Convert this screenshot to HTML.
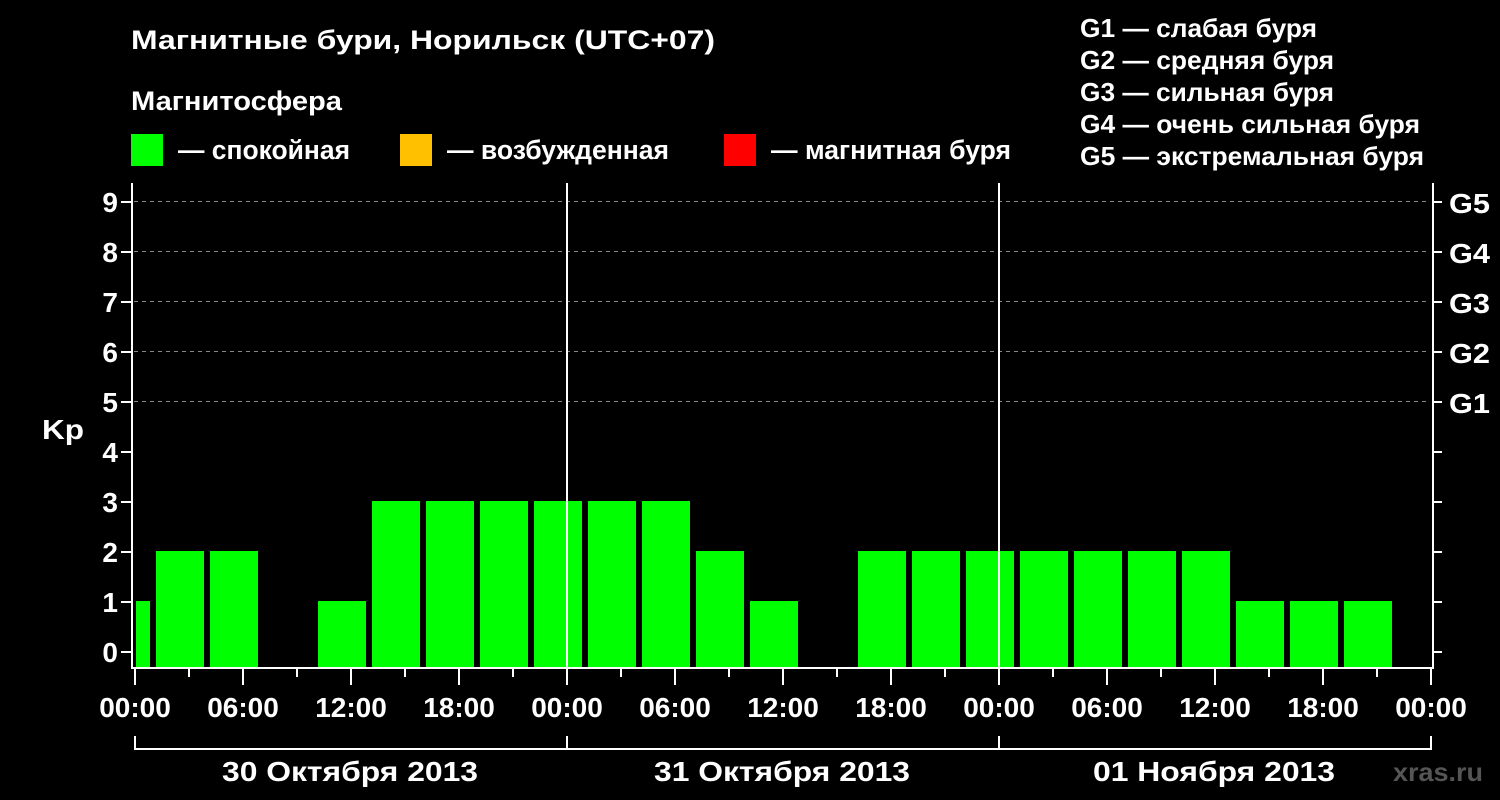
<!DOCTYPE html><html><head><style>body{margin:0;background:#000}svg{display:block}text{font-family:"Liberation Sans","DejaVu Sans",sans-serif;font-weight:bold;fill:#fff}</style></head><body>
<svg width="1500" height="800" viewBox="0 0 1500 800" xmlns="http://www.w3.org/2000/svg">
<rect width="1500" height="800" fill="#000"/>
<text x="131" y="49" font-size="27" textLength="584" lengthAdjust="spacingAndGlyphs">Магнитные бури, Норильск (UTC+07)</text>
<text x="131" y="110" font-size="27" textLength="211" lengthAdjust="spacingAndGlyphs">Магнитосфера</text>
<rect x="131" y="134" width="32" height="32" fill="#0f0"/><text x="178" y="159" font-size="27" textLength="172" lengthAdjust="spacingAndGlyphs">— спокойная</text>
<rect x="400" y="134" width="32" height="32" fill="#ffc000"/><text x="447" y="159" font-size="27" textLength="222" lengthAdjust="spacingAndGlyphs">— возбужденная</text>
<rect x="724" y="134" width="32" height="32" fill="#f00"/><text x="771" y="159" font-size="27" textLength="240" lengthAdjust="spacingAndGlyphs">— магнитная буря</text>
<g font-size="26"><text x="1080" y="37" textLength="237" lengthAdjust="spacingAndGlyphs">G1 — слабая буря</text><text x="1080" y="69" textLength="254" lengthAdjust="spacingAndGlyphs">G2 — средняя буря</text><text x="1080" y="101" textLength="254" lengthAdjust="spacingAndGlyphs">G3 — сильная буря</text><text x="1080" y="133" textLength="340" lengthAdjust="spacingAndGlyphs">G4 — очень сильная буря</text><text x="1080" y="165" textLength="344" lengthAdjust="spacingAndGlyphs">G5 — экстремальная буря</text></g>
<g stroke="#888" stroke-dasharray="4,4" stroke-width="1"><line x1="134" x2="1430" y1="201.5" y2="201.5"/><line x1="134" x2="1430" y1="251.5" y2="251.5"/><line x1="134" x2="1430" y1="301.5" y2="301.5"/><line x1="134" x2="1430" y1="351.5" y2="351.5"/><line x1="134" x2="1430" y1="401.5" y2="401.5"/></g>
<g fill="#0f0">
<rect x="136" y="601" width="14" height="66"/>
<rect x="156" y="551" width="48" height="116"/><rect x="210" y="551" width="48" height="116"/>
<rect x="318" y="601" width="48" height="66"/>
<rect x="372" y="501" width="48" height="166"/><rect x="426" y="501" width="48" height="166"/><rect x="480" y="501" width="48" height="166"/><rect x="534" y="501" width="48" height="166"/><rect x="588" y="501" width="48" height="166"/><rect x="642" y="501" width="48" height="166"/>
<rect x="696" y="551" width="48" height="116"/><rect x="750" y="601" width="48" height="66"/>
<rect x="858" y="551" width="48" height="116"/><rect x="912" y="551" width="48" height="116"/><rect x="966" y="551" width="48" height="116"/><rect x="1020" y="551" width="48" height="116"/><rect x="1074" y="551" width="48" height="116"/><rect x="1128" y="551" width="48" height="116"/><rect x="1182" y="551" width="48" height="116"/>
<rect x="1236" y="601" width="48" height="66"/><rect x="1290" y="601" width="48" height="66"/><rect x="1344" y="601" width="48" height="66"/>
</g>
<g stroke="#fff" stroke-width="2" fill="none">
<path d="M132 183V668H1433V183"/>
<line x1="567" y1="183" x2="567" y2="668"/><line x1="999" y1="183" x2="999" y2="668"/>
<path d="M121 652h11M121 602h11M121 552h11M121 502h11M121 452h11M121 402h11M121 352h11M121 302h11M121 252h11M121 202h11"/>
<path d="M1433 652h9M1433 602h9M1433 552h9M1433 502h9M1433 452h9M1433 402h9M1433 352h9M1433 302h9M1433 252h9M1433 202h9"/>
<path d="M135 669v16M243 669v16M351 669v16M459 669v16M567 669v16M675 669v16M783 669v16M891 669v16M999 669v16M1107 669v16M1215 669v16M1323 669v16M1431 669v16"/>
<path d="M189 669v8M297 669v8M405 669v8M513 669v8M621 669v8M729 669v8M837 669v8M945 669v8M1053 669v8M1161 669v8M1269 669v8M1377 669v8"/>
<path d="M135 736V749H1431V736M567 736v13M999 736v13"/>
</g>
<g font-size="28" text-anchor="end"><text x="118" y="662">0</text><text x="118" y="612">1</text><text x="118" y="562">2</text><text x="118" y="512">3</text><text x="118" y="462">4</text><text x="118" y="412">5</text><text x="118" y="362">6</text><text x="118" y="312">7</text><text x="118" y="262">8</text><text x="118" y="212">9</text></g>
<text x="42" y="439" font-size="28" textLength="42" lengthAdjust="spacingAndGlyphs">Kp</text>
<g font-size="28"><text x="1449" y="213" textLength="41" lengthAdjust="spacingAndGlyphs">G5</text><text x="1449" y="263" textLength="41" lengthAdjust="spacingAndGlyphs">G4</text><text x="1449" y="313" textLength="41" lengthAdjust="spacingAndGlyphs">G3</text><text x="1449" y="363" textLength="41" lengthAdjust="spacingAndGlyphs">G2</text><text x="1449" y="413" textLength="41" lengthAdjust="spacingAndGlyphs">G1</text></g>
<g font-size="28" text-anchor="middle"><text x="135" y="717">00:00</text><text x="243" y="717">06:00</text><text x="351" y="717">12:00</text><text x="459" y="717">18:00</text><text x="567" y="717">00:00</text><text x="675" y="717">06:00</text><text x="783" y="717">12:00</text><text x="891" y="717">18:00</text><text x="999" y="717">00:00</text><text x="1107" y="717">06:00</text><text x="1215" y="717">12:00</text><text x="1323" y="717">18:00</text><text x="1431" y="717">00:00</text></g>
<g font-size="28"><text x="222" y="781" textLength="256" lengthAdjust="spacingAndGlyphs">30 Октября 2013</text><text x="654" y="781" textLength="256" lengthAdjust="spacingAndGlyphs">31 Октября 2013</text><text x="1093" y="781" textLength="242" lengthAdjust="spacingAndGlyphs">01 Ноября 2013</text></g>
<text x="1393" y="781" font-size="26" style="fill:#555" textLength="90" lengthAdjust="spacingAndGlyphs">xras.ru</text>
</svg></body></html>
